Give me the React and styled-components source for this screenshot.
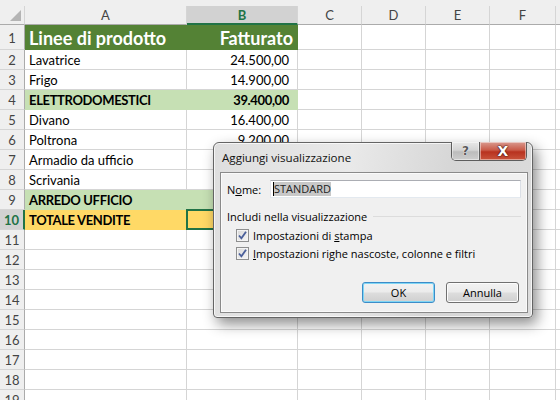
import React from 'react';
import styled, { createGlobalStyle, css } from 'styled-components';

const GlobalStyle = createGlobalStyle`
  html, body {
    margin: 0;
    padding: 0;
    background: #fff;
    overflow: hidden;
  }
`;

const Page = styled.div`
  position: relative;
  width: 560px;
  height: 400px;
  overflow: hidden;
  background: #fff;
  font-family: Lato, "Liberation Sans", sans-serif;
`;

const TopStrip = styled.div`
  height: 6px;
  background: #efefef;
`;

const Sheet = styled.div`
  display: grid;
  grid-template-columns: 25px 162px 111px 64px 64px 64px 66px 40px;
  grid-template-rows: 19px 25px;
  grid-auto-rows: 20px;
`;

const Corner = styled.div`
  position: relative;
  background: #efefef;
  border-right: 1px solid #d5d5d5;
  border-bottom: 1px solid #ababab;
  box-sizing: border-box;
  svg {
    position: absolute;
    right: 3px;
    bottom: 3px;
  }
`;

const ColHead = styled.div`
  box-sizing: border-box;
  display: flex;
  align-items: center;
  justify-content: center;
  background: ${p => (p.$active ? '#d2d2d2' : '#efefef')};
  border-right: 1px solid #d5d5d5;
  border-bottom: ${p => (p.$active ? '2px solid #217346' : '1px solid #ababab')};
  color: ${p => (p.$active ? '#217346' : '#444')};
  font-weight: ${p => (p.$active ? 700 : 400)};
  font-size: 13px;
`;

const RowHead = styled.div`
  box-sizing: border-box;
  display: flex;
  align-items: center;
  justify-content: center;
  background: ${p => (p.$active ? '#d2d2d2' : '#efefef')};
  border-right: ${p => (p.$active ? '2px solid #217346' : '1px solid #ababab')};
  border-bottom: 1px solid #d5d5d5;
  color: ${p => (p.$active ? '#217346' : '#444')};
  font-weight: ${p => (p.$active ? 700 : 400)};
  font-size: 13px;
  padding-top: 1px;
`;

const Cell = styled.div`
  position: relative;
  box-sizing: border-box;
  display: flex;
  align-items: center;
  justify-content: ${p => (p.$right ? 'flex-end' : 'flex-start')};
  padding: 1px ${p => (p.$right ? (p.$title ? '4px' : '8px') : '0')} 0 4px;
  background: ${p => p.$fill || '#fff'};
  border-right: 1px solid ${p => p.$fill || '#d5d5d5'};
  border-bottom: 1px solid ${p => p.$fill || '#d5d5d5'};
  color: ${p => (p.$title ? '#fff' : '#000')};
  font-weight: ${p => (p.$bold ? 700 : 400)};
  font-size: ${p => (p.$title ? '18px' : '13px')};
  letter-spacing: ${p => (p.$bold && !p.$title ? '-0.35px' : '0')};
  white-space: nowrap;
  ${p =>
    p.$selected &&
    css`
      &::after {
        content: '';
        position: absolute;
        left: -1px;
        top: -1px;
        right: -1px;
        bottom: -1px;
        border: 2px solid #217346;
      }
    `}
`;

/* dialog */

const Window = styled.div`
  position: absolute;
  left: 213px;
  top: 142px;
  width: 320px;
  height: 176px;
  box-sizing: border-box;
  display: flex;
  flex-direction: column;
  padding: 0 4px 4px 6px;
  border: 1px solid #646464;
  border-radius: 6px 6px 4px 4px;
  background: linear-gradient(100deg, #dedede 0%, #e9e9e9 40%, #d6d6d6 70%, #dcdcdc 100%);
  box-shadow: 4px 6px 14px rgba(0, 0, 0, 0.45), inset 0 0 0 1px rgba(255, 255, 255, 0.7);
  font-family: "Open Sans", "Noto Sans", sans-serif;
  font-size: 11px;
  color: #000;
`;

const TitleBar = styled.div`
  height: 29px;
  display: flex;
  align-items: center;
`;

const Title = styled.div`
  flex: 1;
  padding-left: 2px;
  font-size: 11.6px;
  color: #111;
`;

const Caption = styled.div`
  align-self: flex-start;
  margin-top: -1px;
  margin-right: 1px;
  display: flex;
  height: 19px;
  border: 1px solid #5d5d5d;
  border-top: none;
  border-radius: 0 0 5px 5px;
  overflow: hidden;
  box-sizing: border-box;
`;

const CapButton = styled.div`
  width: ${p => (p.$close ? '46px' : '27px')};
  display: flex;
  align-items: center;
  justify-content: center;
  font-family: "DejaVu Sans", sans-serif;
  font-weight: 700;
  font-size: ${p => (p.$close ? '14px' : '12px')};
  box-shadow: inset 0 0 0 1px rgba(255, 255, 255, 0.45);
  ${p =>
    p.$close
      ? css`
          background: linear-gradient(#d99a8f 0%, #c95a48 45%, #b8321f 55%, #c9543c 100%);
          border-left: 1px solid #5d5d5d;
          color: #fff;
          text-shadow: 0 0 1px #4a1a12, 0 0 1px #4a1a12, 0 0 2px #4a1a12;
        `
      : css`
          background: linear-gradient(#e8e8e8 0%, #d4d4d4 45%, #bcbcbc 55%, #cdcdcd 100%);
          color: #5a5a5a;
          text-shadow: 0 0 1px #fff, 0 0 1px #fff;
        `}
`;

const Client = styled.div`
  flex: 1;
  display: flex;
  flex-direction: column;
  padding: 7px 6px 9px 6px;
  border: 1px solid #8a8a8a;
  background: #f0f0f0;
  box-shadow: inset 0 0 0 1px #fafafa;
`;

const FieldRow = styled.div`
  display: flex;
  align-items: center;
  height: 18px;
`;

const Label = styled.label`
  width: 43px;
  flex: none;
`;

const Input = styled.div`
  flex: 1;
  height: 18px;
  box-sizing: border-box;
  display: flex;
  align-items: center;
  padding-left: 2px;
  background: #fff;
  border: 1px solid #abadb3;
  border-left-color: #e2e3ea;
  border-right-color: #dbdfe6;
  border-bottom-color: #e3e9ef;
`;

const Selected = styled.span`
  background: #c8c8c8;
  color: #222;
  line-height: 14px;
  border-left: 1px solid #000;
`;

const GroupHead = styled.div`
  margin-top: 11px;
  display: flex;
  align-items: center;
  gap: 6px;
  &::after {
    content: '';
    flex: 1;
    height: 1px;
    background: #dcdcdc;
  }
`;

const CheckRow = styled.div`
  display: flex;
  align-items: center;
  gap: 4px;
  margin-top: ${p => (p.$first ? '4px' : '3px')};
  padding-left: 9px;
  height: 15px;
`;

const Box = styled.span`
  width: 13px;
  height: 13px;
  box-sizing: border-box;
  border: 1px solid #8e8f8f;
  background: linear-gradient(135deg, #d8d8d8, #f6f6f6);
  box-shadow: inset 0 0 0 1px #f4f4f4;
  display: flex;
  align-items: center;
  justify-content: center;
`;

const Buttons = styled.div`
  margin-top: auto;
  display: flex;
  justify-content: flex-end;
  gap: 11px;
  padding-right: 2px;
`;

const Button = styled.div`
  width: 73px;
  height: 21px;
  box-sizing: border-box;
  display: flex;
  align-items: center;
  justify-content: center;
  border-radius: 3px;
  border: 1px solid ${p => (p.$default ? '#3c8cc8' : '#707070')};
  background: linear-gradient(#f2f2f2 0%, #ebebeb 49%, #dddddd 51%, #cfcfcf 100%);
  box-shadow: inset 0 0 0 1px ${p => (p.$default ? '#7fd6f5' : '#fcfcfc')};
  color: #000;
`;

const Check = () => (
  <svg width="9" height="9" viewBox="0 0 9 9">
    <path d="M1 4.5 L3.4 7.3 L8 0.8" fill="none" stroke="#4a5f9a" strokeWidth="1.8" />
  </svg>
);

// B7..B10 sit under the dialog, so they stay blank
const rows = [
  { n: 1, a: 'Linee di prodotto', b: 'Fatturato', kind: 'title' },
  { n: 2, a: 'Lavatrice', b: '24.500,00' },
  { n: 3, a: 'Frigo', b: '14.900,00' },
  { n: 4, a: 'ELETTRODOMESTICI', b: '39.400,00', kind: 'sub' },
  { n: 5, a: 'Divano', b: '16.400,00' },
  { n: 6, a: 'Poltrona', b: '9.200,00' },
  { n: 7, a: 'Armadio da ufficio', b: '' },
  { n: 8, a: 'Scrivania', b: '' },
  { n: 9, a: 'ARREDO UFFICIO', b: '', kind: 'sub' },
  { n: 10, a: 'TOTALE VENDITE', b: '', kind: 'total' },
  ...Array.from({ length: 9 }, (_, i) => ({ n: 11 + i, a: '', b: '' })),
];

const fills = { title: '#548235', sub: '#c6e0b4', total: '#ffd966' };
const cols = ['A', 'B', 'C', 'D', 'E', 'F', ''];

export default function App() {
  return (
    <Page>
      <GlobalStyle />
      <TopStrip />
      <Sheet>
        <Corner>
          <svg width="11" height="11" viewBox="0 0 11 11">
            <path d="M11 0 L11 11 L0 11 Z" fill="#b4b4b4" />
          </svg>
        </Corner>
        {cols.map((c, i) => (
          <ColHead key={i} $active={c === 'B'}>
            {c}
          </ColHead>
        ))}
        {rows.map(r => {
          const fill = fills[r.kind];
          const bold = !!r.kind;
          const title = r.kind === 'title';
          return (
            <React.Fragment key={r.n}>
              <RowHead $active={r.n === 10}>{r.n}</RowHead>
              <Cell $fill={fill} $bold={bold} $title={title}>
                {r.a}
              </Cell>
              <Cell $fill={fill} $bold={bold} $title={title} $right $selected={r.n === 10}>
                {r.b}
              </Cell>
              {cols.slice(2).map((c, i) => (
                <Cell key={i} />
              ))}
            </React.Fragment>
          );
        })}
      </Sheet>

      <Window>
        <TitleBar>
          <Title>Aggiungi visualizzazione</Title>
          <Caption>
            <CapButton>?</CapButton>
            <CapButton $close>X</CapButton>
          </Caption>
        </TitleBar>
        <Client>
          <FieldRow>
            <Label>
              N<u>o</u>me:
            </Label>
            <Input>
              <Selected>STANDARD</Selected>
            </Input>
          </FieldRow>
          <GroupHead>Includi nella visualizzazione</GroupHead>
          <CheckRow $first>
            <Box>
              <Check />
            </Box>
            <span>
              Impostazioni di <u>s</u>tampa
            </span>
          </CheckRow>
          <CheckRow>
            <Box>
              <Check />
            </Box>
            <span>
              <u>I</u>mpostazioni righe nascoste, colonne e filtri
            </span>
          </CheckRow>
          <Buttons>
            <Button $default>OK</Button>
            <Button>Annulla</Button>
          </Buttons>
        </Client>
      </Window>
    </Page>
  );
}
